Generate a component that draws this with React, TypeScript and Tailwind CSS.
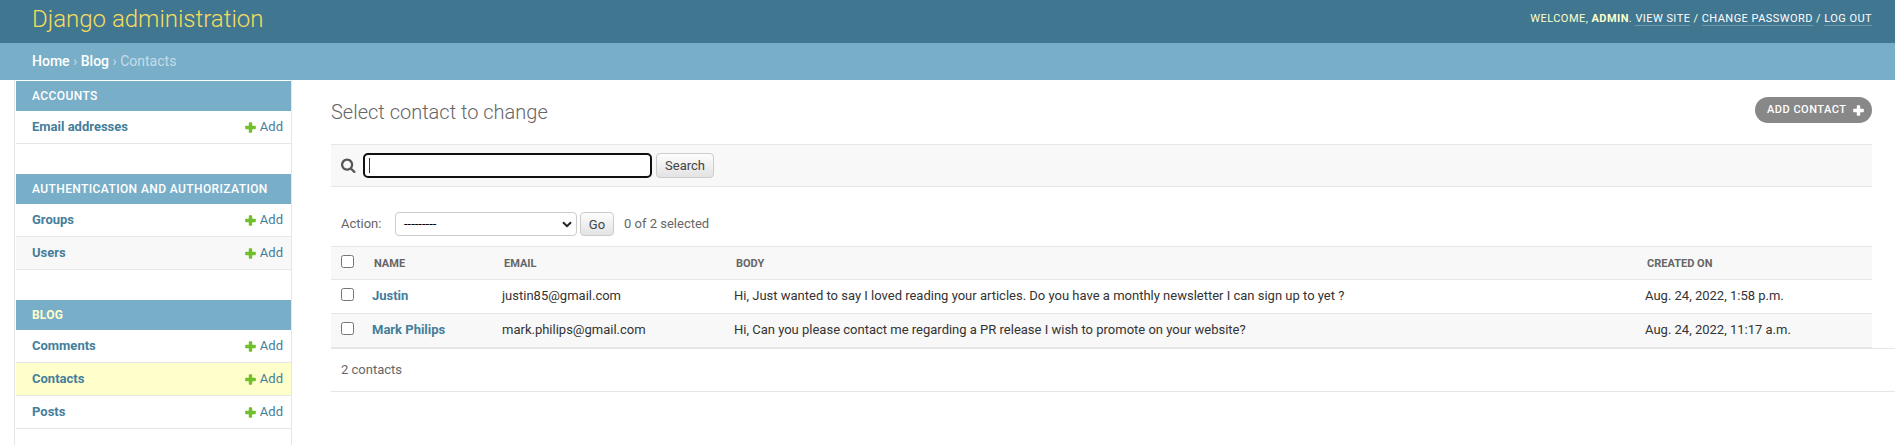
import React from "react";

type Module = { title: string; active?: boolean; models: { name: string; tone: string }[] };

const modules: Module[] = [
  { title: "Accounts", models: [{ name: "Email addresses", tone: "bg-white" }] },
  {
    title: "Authentication and Authorization",
    models: [
      { name: "Groups", tone: "bg-white" },
      { name: "Users", tone: "bg-[#f8f8f8]" },
    ],
  },
  {
    title: "Blog",
    active: true,
    models: [
      { name: "Comments", tone: "bg-white" },
      { name: "Contacts", tone: "bg-[#ffffcc]" },
      { name: "Posts", tone: "bg-white" },
    ],
  },
];

const contacts = [
  {
    name: "Justin",
    email: "justin85@gmail.com",
    body: "Hi, Just wanted to say I loved reading your articles. Do you have a monthly newsletter I can sign up to yet ?",
    created: "Aug. 24, 2022, 1:58 p.m.",
    tone: "bg-white",
  },
  {
    name: "Mark Philips",
    email: "mark.philips@gmail.com",
    body: "Hi, Can you please contact me regarding a PR release I wish to promote on your website?",
    created: "Aug. 24, 2022, 11:17 a.m.",
    tone: "bg-[#f8f8f8]",
  },
];

const searchPath =
  "M1216 832q0-185-131.500-316.500t-316.500-131.500-316.500 131.500-131.500 316.500 131.500 316.500 316.500 131.500 316.500-131.500 131.500-316.500zm512 832q0 52-38 90t-90 38q-54 0-90-38l-343-342q-179 124-399 124-143 0-273.500-55.500t-225-150-150-225-55.500-273.500 55.500-273.500 150-225 225-150 273.500-55.500 273.500 55.500 225 150 150 225 55.500 273.500q0 220-124 399l343 343q37 37 37 90z";

function Plus({ className }: { className: string }) {
  return (
    <svg className={className} width="11" height="11" viewBox="0 0 11 11">
      <rect x="3.800" y="0.200" width="3.400" height="10.600" rx="0.800" />
      <rect x="0.200" y="3.800" width="10.600" height="3.400" rx="0.800" />
    </svg>
  );
}

function Sidebar() {
  return (
    <nav className="flex h-[365px] w-[278px] shrink-0 flex-col gap-[30px] overflow-hidden border-x border-[#e6e6e6] pt-px pl-px">
      {modules.map((m) => (
        <section key={m.title}>
          <h2
            className={`h-[30px] bg-[#79aec8] pl-4 text-[12px] leading-[30px] uppercase ${
              m.active ? "font-bold tracking-[0.2px] text-[#ffffcc]" : "font-medium tracking-[0.4px] text-white"
            }`}
          >
            {m.title}
          </h2>
          {m.models.map((r) => (
            <div
              key={r.name}
              className={`flex h-[33px] items-center border-b border-[#e6e6e6] pr-2 pl-4 text-[13px] text-[#447e9b] ${r.tone}`}
            >
              <span className="font-bold">{r.name}</span>
              <span className="ml-auto flex w-[38px] items-center justify-between">
                <Plus className="fill-[#70bf2b]" />
                Add
              </span>
            </div>
          ))}
        </section>
      ))}
    </nav>
  );
}

const box =
  "block h-[13px] w-[13px] rounded-[2.5px] border border-[#767676] bg-white";
const grid = "grid grid-cols-[41px_130px_232px_911px_1fr] pl-0";
const button =
  "rounded-[4px] border border-[#ccc] bg-linear-to-b from-[#fdfdfd] to-[#e3e3e3] text-[13px] text-[#444]";

export default function App() {
  return (
    <div className="h-[445px] w-full overflow-hidden bg-white font-['Roboto','Liberation_Sans',sans-serif] text-[13px] text-[#333]">
      <header className="flex h-[43px] justify-between bg-[#417690] pr-[23px] pl-8">
        <h1 className="text-[24px] leading-[38px] font-light text-[#f5dd5d]">Django administration</h1>
        <div className="pt-[11px] text-[11px] leading-[15px] tracking-[0.45px] whitespace-nowrap text-[#ffffcc] uppercase">
          Welcome, <strong className="font-bold">admin</strong>.{" "}
          <a className="border-b border-white/25 text-white">View site</a> /{" "}
          <a className="border-b border-white/25 text-white">Change password</a> /{" "}
          <a className="border-b border-white/25 text-white">Log out</a>
        </div>
      </header>
      <div className="h-[37px] bg-[#79aec8] pl-8 text-[14px] leading-[36px] text-[#c4dce8]">
        <span className="font-medium text-white">Home</span> ›{" "}
        <span className="font-medium text-white">Blog</span> › Contacts
      </div>
      <div className="flex pl-[14px]">
        <Sidebar />
        <main className="min-w-0 flex-1 pl-[39px]">
          <div className="flex h-16 items-start justify-between pr-[23px]">
            <h1 className="pt-[20px] text-[20px] leading-[24px] font-light text-[#666]">Select contact to change</h1>
            <a className="mt-[17px] flex h-[26px] w-[117px] items-center justify-between rounded-full bg-[#888] pr-2 pl-3 text-[11px] leading-[26px] font-medium tracking-[0.5px] whitespace-nowrap text-white uppercase">
              Add contact
              <Plus className="fill-white" />
            </a>
          </div>
          <div className="mr-[23px] flex h-[43px] items-center border-y border-[#e6e6e6] bg-[#f8f8f8] pl-[10px]">
            <svg width="15" height="15" viewBox="64 64 1728 1728" fill="#555">
              <path d={searchPath} />
            </svg>
            <div className="ml-[7px] flex h-[25px] w-[289px] items-center rounded-[5px] border-2 border-[#101010] bg-white pl-1">
              <span className="h-[15px] w-px bg-[#333]" />
            </div>
            <button className={`ml-1 h-[25px] w-[58px] ${button}`}>Search</button>
          </div>
          <div className="flex h-[59px] items-start pt-[25px] pl-[10px] text-[#666]">
            <span className="w-[54px] leading-[23px]">Action:</span>
            <div className="flex h-6 w-[182px] items-center justify-between rounded-[4px] border border-[#ccc] bg-white pr-1 pl-2 text-black">
              <span>---------</span>
              <svg width="10" height="7" viewBox="0 0 10 7" fill="none" stroke="#222" strokeWidth="2">
                <path d="M1 1.200L5 5.200L9 1.200" />
              </svg>
            </div>
            <button className={`ml-[3px] h-6 w-[34px] pt-px ${button}`}>Go</button>
            <span className="ml-[10px] leading-[23px]">0 of 2 selected</span>
          </div>
          <div className="mr-[23px]">
            <div
              className={`${grid} h-[34px] border-y border-[#e6e6e6] bg-[#f8f8f8] text-[11px] leading-[33px] font-bold text-[#666] uppercase`}
            >
              <span className="pt-2 pl-[10px]">
                <span className={box} />
              </span>
              <span className="pl-[2px]">Name</span>
              <span className="pl-[2px]">Email</span>
              <span className="pl-[2px]">Body</span>
              <span className="pl-[2px]">Created on</span>
            </div>
            {contacts.map((c) => (
              <div key={c.name} className={`${grid} h-[34px] border-b border-[#e6e6e6] leading-[32px] ${c.tone}`}>
                <span className="pt-2 pl-[10px]">
                  <span className={box} />
                </span>
                <span className="font-bold text-[#447e9b]">{c.name}</span>
                <span>{c.email}</span>
                <span>{c.body}</span>
                <span>{c.created}</span>
              </div>
            ))}
          </div>
          <div className="h-[44px] border-y border-[#e6e6e6] pl-[10px] leading-[42px] text-[#666]">2 contacts</div>
        </main>
      </div>
    </div>
  );
}
